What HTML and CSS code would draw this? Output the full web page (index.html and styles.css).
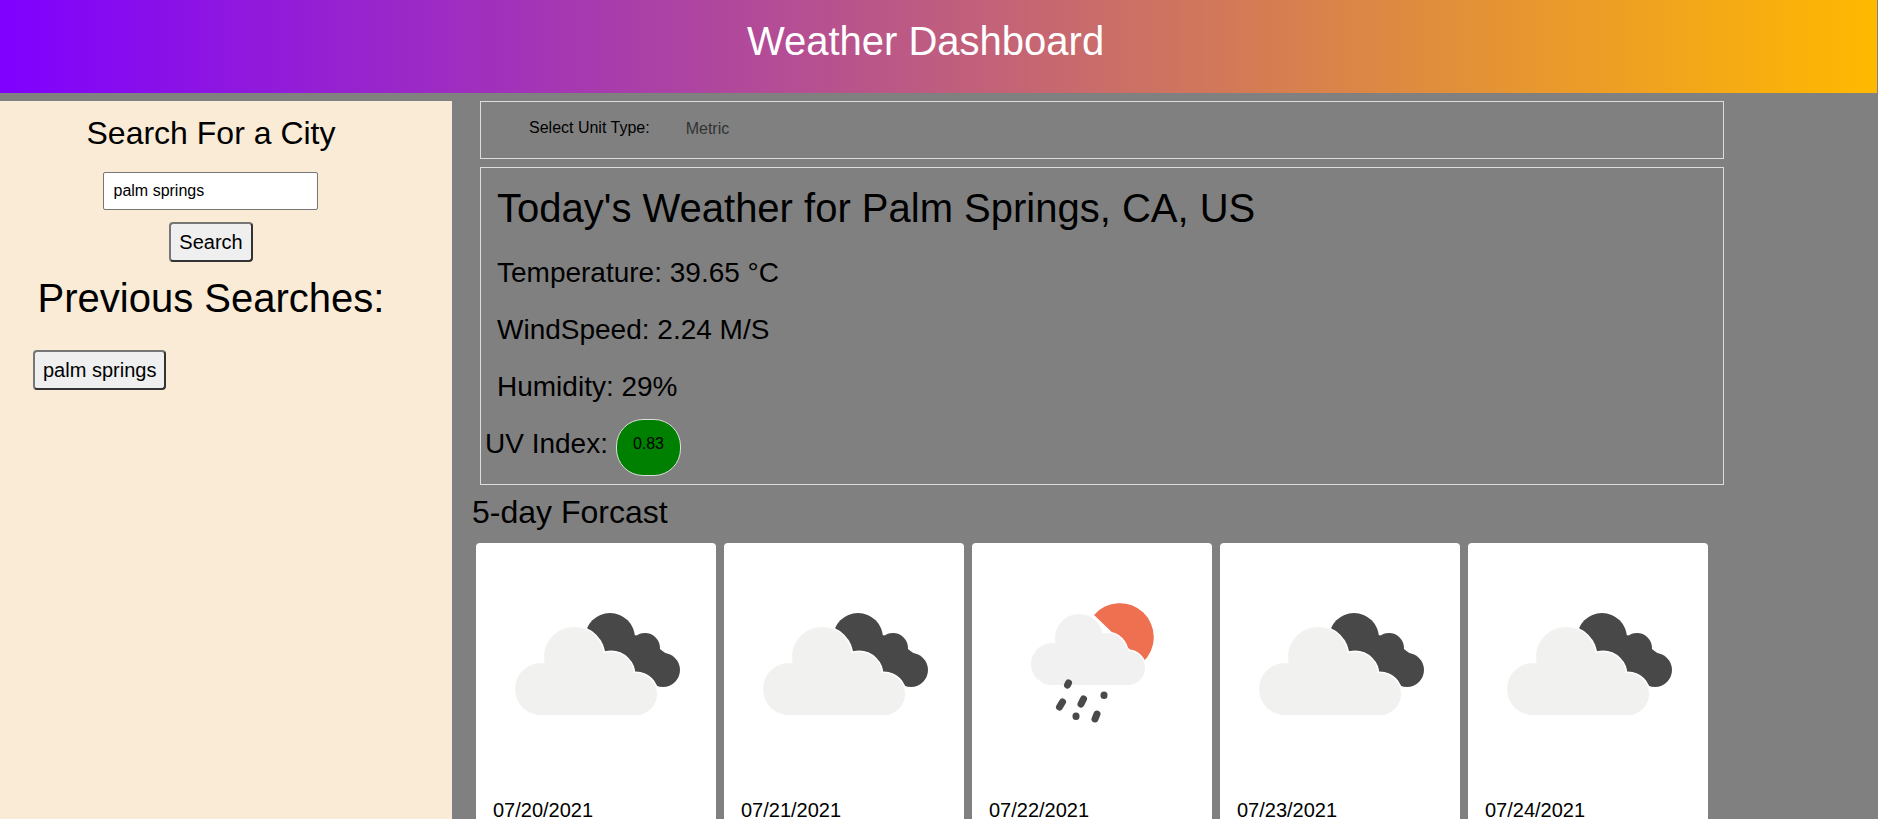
FILE: index.html
```html
<!DOCTYPE html>
<html lang="en">
<head>
    <meta charset="UTF-8">
    <meta name="viewport" content="width=device-width, initial-scale=1.0">
    <title>Weather Dashboard</title>
    <link rel="stylesheet" href="styles.css">
</head>
<body>
    <header class="top-bar">
        <h1>Weather Dashboard</h1>
    </header>

    <div class="page">
        <aside class="sidebar">
            <h2 class="search-title">Search For a City</h2>
            <input class="city-input" type="text" value="palm springs">
            <button class="btn" type="button">Search</button>
            <h2 class="previous-title">Previous Searches:</h2>
            <div class="history">
                <button class="btn" type="button">palm springs</button>
            </div>
        </aside>

        <main class="content">
            <section class="panel unit-panel">
                <span class="unit-label">Select Unit Type:</span>
                <span class="unit-value">Metric</span>
            </section>

            <section class="panel today-panel">
                <h2>Today's Weather for Palm Springs, CA, US</h2>
                <p>Temperature: 39.65 °C</p>
                <p>WindSpeed: 2.24 M/S</p>
                <p>Humidity: 29%</p>
                <div class="uv-row">
                    <span class="uv-label">UV Index:</span>
                    <span class="uv-badge">0.83</span>
                </div>
            </section>

            <h3 class="forecast-title">5-day Forcast</h3>

            <div class="cards">
                <article class="card">
                    <svg class="card-icon" viewBox="0 0 240 240">
                        <defs>
                            <!-- broken clouds -->
                            <symbol id="icon-clouds" viewBox="0 0 240 240">
                                <g fill="#484849">
                                    <circle cx="134" cy="95" r="25"/>
                                    <circle cx="169" cy="105" r="15"/>
                                    <circle cx="187" cy="127" r="17"/>
                                    <polygon points="114,100 134,85 169,95 192,112 178,144 140,130"/>
                                </g>
                                <g fill="#fff" stroke="#fff" stroke-width="3">
                                    <circle cx="65" cy="146" r="26"/>
                                    <circle cx="98" cy="114" r="30"/>
                                    <circle cx="135" cy="132" r="23"/>
                                    <circle cx="160" cy="151" r="21"/>
                                </g>
                                <g fill="#f1f1f0">
                                    <circle cx="65" cy="146" r="26"/>
                                    <circle cx="98" cy="114" r="30"/>
                                    <circle cx="135" cy="132" r="23"/>
                                    <circle cx="160" cy="151" r="21"/>
                                    <rect x="65" y="130" width="95" height="42"/>
                                </g>
                            </symbol>
                        </defs>
                        <use href="#icon-clouds"/>
                    </svg>
                    <div class="card-body">07/20/2021</div>
                </article>

                <article class="card">
                    <svg class="card-icon" viewBox="0 0 240 240"><use href="#icon-clouds"/></svg>
                    <div class="card-body">07/21/2021</div>
                </article>

                <article class="card">
                    <!-- light rain -->
                    <svg class="card-icon" viewBox="0 0 240 240">
                        <path d="M122 72A34 34 0 1 1 171 119Z" fill="#ee7050"/>
                        <g fill="#fff" stroke="#fff" stroke-width="3">
                            <circle cx="80" cy="121" r="22"/>
                            <circle cx="107" cy="95" r="24"/>
                            <circle cx="135" cy="110" r="20"/>
                            <circle cx="156" cy="125" r="17"/>
                        </g>
                        <g fill="#f1f1f1">
                            <circle cx="80" cy="121" r="21"/>
                            <circle cx="107" cy="95" r="24"/>
                            <circle cx="135" cy="110" r="20"/>
                            <circle cx="156" cy="125" r="17"/>
                            <rect x="80" y="105" width="76" height="37"/>
                        </g>
                        <g stroke="#4a4a4a" stroke-width="7" stroke-linecap="round">
                            <path d="M96.5 140L95.5 142"/>
                            <path d="M90.5 159L87.5 164"/>
                            <path d="M111.500 156L109 161"/>
                            <path d="M132 152L132 152.500"/>
                            <path d="M104 173L104 173.500"/>
                            <path d="M125 171L123 176"/>
                        </g>
                    </svg>
                    <div class="card-body">07/22/2021</div>
                </article>

                <article class="card">
                    <svg class="card-icon" viewBox="0 0 240 240"><use href="#icon-clouds"/></svg>
                    <div class="card-body">07/23/2021</div>
                </article>

                <article class="card">
                    <svg class="card-icon" viewBox="0 0 240 240"><use href="#icon-clouds"/></svg>
                    <div class="card-body">07/24/2021</div>
                </article>
            </div>
        </main>
    </div>
</body>
</html>
```

FILE: styles.css
```css
html,
body {
    height: 100%;
}

body {
    margin: 0;
    overflow: hidden;
    background-color: #808080;
    color: #000;
    font-family: "Liberation Sans", Arial, sans-serif;
}

/* Header */
.top-bar {
    height: 93px;
    box-sizing: border-box;
    margin-right: 1px;
    padding: 0 26px 10px 0;
    display: flex;
    align-items: center;
    justify-content: center;
    background: linear-gradient(to right, #7f00ff, #ffb900);
}

.top-bar h1 {
    margin: 0;
    color: #fff;
    font-size: 40px;
    font-weight: normal;
}

.page {
    display: flex;
    margin-top: 8px;
    height: calc(100vh - 101px);
}

/* Sidebar */
.sidebar {
    width: 452px;
    flex-shrink: 0;
    box-sizing: border-box;
    padding: 14px 30px 0 0;
    display: flex;
    flex-direction: column;
    align-items: center;
    background-color: #faebd7;
}

.search-title {
    margin: 0 0 20px;
    font-size: 32px;
    line-height: 37px;
    font-weight: normal;
}

.city-input {
    width: 215px;
    height: 38px;
    box-sizing: border-box;
    margin: 0 2px 12px 0;
    padding: 0 10px;
    border: 1px solid #767676;
    border-radius: 2px;
    background: #fff;
    font-family: inherit;
    font-size: 16px;
}

.btn {
    height: 40px;
    padding: 0 8px;
    border: 2px solid;
    border-color: #767676 #333 #333 #767676;
    border-radius: 4px;
    background-color: #efefef;
    font-family: inherit;
    font-size: 20px;
}

.previous-title {
    margin: 13px 0 0;
    font-size: 40px;
    line-height: 46px;
    font-weight: normal;
}

.history {
    align-self: flex-start;
    margin: 29px 0 0 33px;
}

/* Main column */
.content {
    flex: 1;
    padding-left: 20px;
}

.panel {
    width: 1244px;
    box-sizing: border-box;
    margin-left: 8px;
    border: 1px solid #ddd;
}

.unit-panel {
    height: 58px;
    padding: 17px 0 0 48px;
    display: flex;
    gap: 36px;
    font-size: 16px;
    line-height: 18px;
}

.unit-value {
    margin-top: 1px;
    color: #333;
}

.today-panel {
    height: 318px;
    margin-top: 8px;
    padding: 17px 0 0 16px;
}

.today-panel h2 {
    margin: 0;
    font-size: 40px;
    line-height: 46px;
    font-weight: normal;
}

.today-panel p {
    margin: 25px 0 0;
    font-size: 28px;
    line-height: 32px;
}

.today-panel h2 + p {
    margin-top: 26px;
}

.uv-row {
    display: flex;
    align-items: flex-start;
    gap: 8px;
    margin: 16px 0 0 -12px;
}

.uv-label {
    margin-top: 9px;
    font-size: 28px;
    line-height: 32px;
}

.uv-badge {
    width: 65px;
    height: 57px;
    box-sizing: border-box;
    padding-top: 15px;
    border: 1px solid #ddd;
    border-radius: 27px;
    background-color: #008000;
    font-size: 16px;
    line-height: 18px;
    text-align: center;
}

.forecast-title {
    margin: 9px 0 0;
    font-size: 32px;
    line-height: 37px;
    font-weight: normal;
}

/* Forecast cards */
.cards {
    display: flex;
    gap: 8px;
    margin: 12px 0 0 4px;
}

.card {
    width: 240px;
    flex-shrink: 0;
    border-radius: 4px;
    background-color: #fff;
}

/* the icons are upscaled in the original, so soften them a little */
.card-icon {
    display: block;
    width: 240px;
    height: 240px;
    filter: blur(0.5px);
}

.card-body {
    padding: 16px 17px;
    font-size: 20px;
    line-height: 23px;
}
```
